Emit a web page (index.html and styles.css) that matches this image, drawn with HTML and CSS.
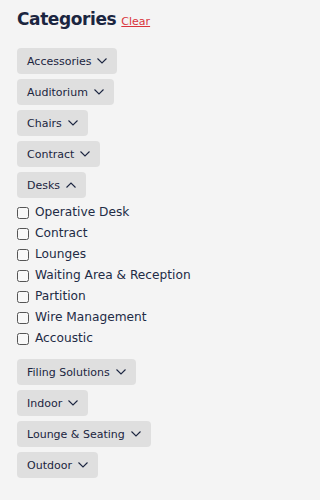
FILE: index.html
```html
<!DOCTYPE html>
<html>
<head>
<meta charset="utf-8">
<link rel="stylesheet" href="styles.css">
</head>
<body>
<div class="filters">
  <div class="head">
    <h2 class="title">Categories</h2>
    <a class="clear" href="#">Clear</a>
  </div>
  <ul class="cats">
    <li><button class="cat">Accessories <svg class="chev" viewBox="0 0 10 6"><path d="M0.5 0.5 L5 5 L9.5 0.5"/></svg></button></li>
    <li><button class="cat">Auditorium <svg class="chev" viewBox="0 0 10 6"><path d="M0.5 0.5 L5 5 L9.5 0.5"/></svg></button></li>
    <li><button class="cat">Chairs <svg class="chev" viewBox="0 0 10 6"><path d="M0.5 0.5 L5 5 L9.5 0.5"/></svg></button></li>
    <li><button class="cat">Contract <svg class="chev" viewBox="0 0 10 6"><path d="M0.5 0.5 L5 5 L9.5 0.5"/></svg></button></li>
    <li class="open">
      <button class="cat">Desks <svg class="chev" viewBox="0 0 10 6"><path d="M0.5 5.5 L5 1 L9.5 5.5"/></svg></button>
      <ul class="subs">
        <li><label><span class="box"></span>Operative Desk</label></li>
        <li><label><span class="box"></span>Contract</label></li>
        <li><label><span class="box"></span>Lounges</label></li>
        <li><label><span class="box"></span>Waiting Area &amp; Reception</label></li>
        <li><label><span class="box"></span>Partition</label></li>
        <li><label><span class="box"></span>Wire Management</label></li>
        <li><label><span class="box"></span>Accoustic</label></li>
      </ul>
    </li>
    <li><button class="cat">Filing Solutions <svg class="chev" viewBox="0 0 10 6"><path d="M0.5 0.5 L5 5 L9.5 0.5"/></svg></button></li>
    <li><button class="cat">Indoor <svg class="chev" viewBox="0 0 10 6"><path d="M0.5 0.5 L5 5 L9.5 0.5"/></svg></button></li>
    <li><button class="cat">Lounge &amp; Seating <svg class="chev" viewBox="0 0 10 6"><path d="M0.5 0.5 L5 5 L9.5 0.5"/></svg></button></li>
    <li><button class="cat">Outdoor <svg class="chev" viewBox="0 0 10 6"><path d="M0.5 0.5 L5 5 L9.5 0.5"/></svg></button></li>
  </ul>
</div>
</body>
</html>
```
FILE: styles.css
```css
html, body {
  margin: 0;
  padding: 0;
  background: #f4f4f4;
}
body {
  font-family: "DejaVu Sans", "Liberation Sans", sans-serif;
  color: #1b2540;
}
.filters {
  padding: 9px 17px 0 17px;
}
.head {
  display: flex;
  align-items: baseline;
  gap: 5px;
  height: 27px;
}
.title {
  margin: 0;
  font-size: 17px;
  font-weight: bold;
  letter-spacing: -0.4px;
  color: #1b2540;
}
.clear {
  color: #d9343c;
  font-size: 11px;
  text-decoration: underline;
}
.cats {
  list-style: none;
  margin: 12px 0 0 0;
  padding: 0;
  display: flex;
  flex-direction: column;
  gap: 5px;
}
.cat {
  display: inline-flex;
  align-items: center;
  gap: 6px;
  height: 26px;
  padding: 0 10px;
  border: none;
  border-radius: 4px;
  background: #dfdfdf;
  font-family: "DejaVu Sans", "Liberation Sans", sans-serif;
  font-size: 11px;
  color: #1b2540;
  cursor: pointer;
}
.chev {
  width: 10px;
  height: 6px;
  fill: none;
  stroke: #1b2540;
  stroke-width: 1.1;
}
.subs {
  list-style: none;
  margin: 9px 0 0 0;
  padding: 0;
}
.subs li {
  height: 21px;
}
.subs label {
  display: flex;
  align-items: center;
  gap: 6px;
  font-size: 12.2px;
  height: 11px;
  line-height: 11px;
  color: #222b45;
}
.box {
  width: 10px;
  height: 10px;
  border: 1px solid #555;
  border-radius: 2.5px;
  background: #f8f8f8;
  flex: none;
}
```
